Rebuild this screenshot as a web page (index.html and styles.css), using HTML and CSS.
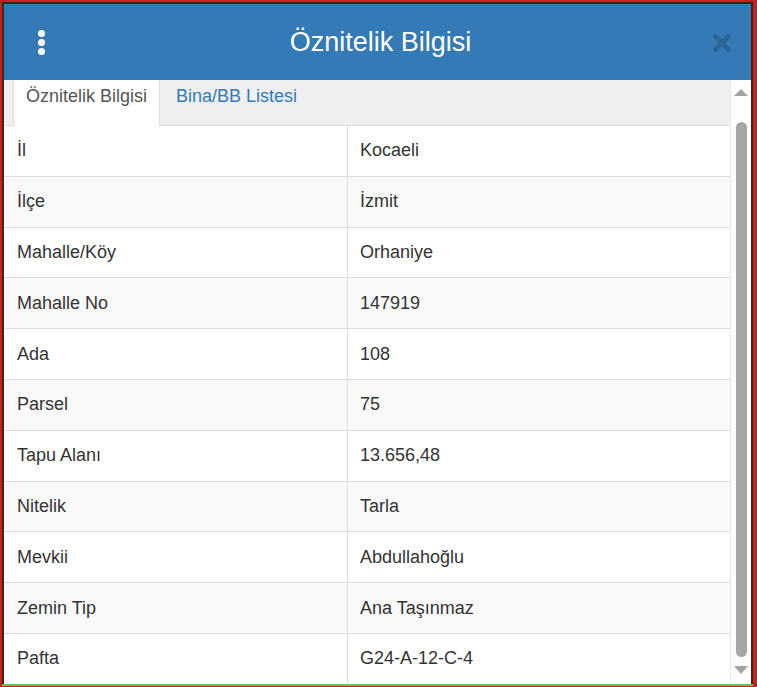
FILE: index.html
```html
<!DOCTYPE html>
<html lang="tr">
<head>
  <meta charset="UTF-8" />
  <title>Öznitelik Bilgisi</title>
  <link rel="stylesheet" href="styles.css">
</head>
<body>
<div class="dialog">
  <div class="dialog-header">
    <span class="menu-btn"><i></i><i></i><i></i></span>
    <h2>Öznitelik Bilgisi</h2>
    <svg class="close-btn" width="20" height="20" viewBox="0 0 20 20">
      <path d="M3.5 3.5 L16.5 16.5 M16.5 3.5 L3.5 16.5" stroke="#2b6598" stroke-width="4.6" stroke-linecap="round" fill="none"/>
    </svg>
  </div>
  <div class="dialog-body">
    <div class="content">
      <ul class="tabs">
        <li class="active">Öznitelik Bilgisi</li>
        <li>Bina/BB Listesi</li>
      </ul>
      <table class="attr-table">
        <tr><td>İl</td><td>Kocaeli</td></tr>
        <tr><td>İlçe</td><td>İzmit</td></tr>
        <tr><td>Mahalle/Köy</td><td>Orhaniye</td></tr>
        <tr><td>Mahalle No</td><td>147919</td></tr>
        <tr><td>Ada</td><td>108</td></tr>
        <tr><td>Parsel</td><td>75</td></tr>
        <tr><td>Tapu Alanı</td><td>13.656,48</td></tr>
        <tr><td>Nitelik</td><td>Tarla</td></tr>
        <tr><td>Mevkii</td><td>Abdullahoğlu</td></tr>
        <tr><td>Zemin Tip</td><td>Ana Taşınmaz</td></tr>
        <tr><td>Pafta</td><td>G24-A-12-C-4</td></tr>
      </table>
    </div>
    <div class="scrollbar">
      <span class="arrow-up"></span>
      <span class="thumb"></span>
      <span class="arrow-down"></span>
    </div>
  </div>
</div>
<div class="map-edge"></div>
</body>
</html>
```

FILE: styles.css
```css
html, body {
  margin: 0;
  height: 100%;
}
body {
  background: #c9221d;
  font-family: 'Liberation Sans', Arial, sans-serif;
  color: #333;
  overflow: hidden;
}
.dialog {
  margin: 2px 0 0 2px;
  width: 747px;
  height: 680px;
  border: 2px solid #3a2422;
  border-bottom: none;
  display: flex;
  flex-direction: column;
  background: #fff;
}
.dialog-header {
  height: 76px;
  flex-shrink: 0;
  background: #337ab7;
  display: flex;
  align-items: center;
  justify-content: space-between;
  padding: 0 19px 0 34px;
}
.dialog-header h2 {
  margin: 0;
  color: #fff;
  font-size: 27px;
  font-weight: normal;
  flex: 1;
  text-align: center;
  padding-left: 4px;
}
.menu-btn {
  display: flex;
  flex-direction: column;
  gap: 2px;
}
.menu-btn i {
  display: block;
  width: 7px;
  height: 7px;
  border-radius: 50%;
  background: #fff;
}
.close-btn {
  margin-top: 2px;
}
.dialog-body {
  flex: 1;
  display: flex;
  overflow: hidden;
}
.content {
  flex: 1;
}
.tabs {
  list-style: none;
  margin: 0;
  padding: 0 0 0 9px;
  height: 46px;
  box-sizing: border-box;
  background: #efefef;
  border-bottom: 1px solid #ddd;
  display: flex;
  font-size: 18px;
}
.tabs li {
  padding: 6px 16px 0 16px;
  color: #337ab7;
}
.tabs li.active {
  background: #fff;
  color: #555;
  padding: 6px 12px 0 12px;
  border-left: 1px solid #ddd;
  border-right: 1px solid #ddd;
  margin-bottom: -1px;
}
.attr-table {
  width: 100%;
  border-collapse: collapse;
  font-size: 18px;
}
.attr-table td {
  height: 49.8px;
  padding: 0 13px;
  border-top: 1px solid #ddd;
  vertical-align: middle;
}
.attr-table tr:first-child td {
  border-top: none;
}
.attr-table td + td {
  border-left: 1px solid #ddd;
  padding-left: 12px;
  width: 357px;
}
.attr-table tr:nth-child(even) {
  background: #f9f9f9;
}
.scrollbar {
  width: 20px;
  flex-shrink: 0;
  background: #fdfdfd;
  border-left: 1px solid #eaeaea;
  display: flex;
  flex-direction: column;
  align-items: center;
}
.arrow-up, .arrow-down {
  width: 0;
  height: 0;
  border-left: 7px solid transparent;
  border-right: 7px solid transparent;
}
.arrow-up {
  margin-top: 9px;
  border-bottom: 7px solid #a3a3a3;
}
.arrow-down {
  margin-top: 9px;
  border-top: 8px solid #a3a3a3;
}
.thumb {
  display: block;
  width: 11px;
  height: 535px;
  margin-top: 26px;
  border-radius: 6px;
  background: #a6a6a6;
}
.map-edge {
  height: 2px;
  width: 751px;
  margin-left: 2px;
  background: #6cbf5a;
}
```
